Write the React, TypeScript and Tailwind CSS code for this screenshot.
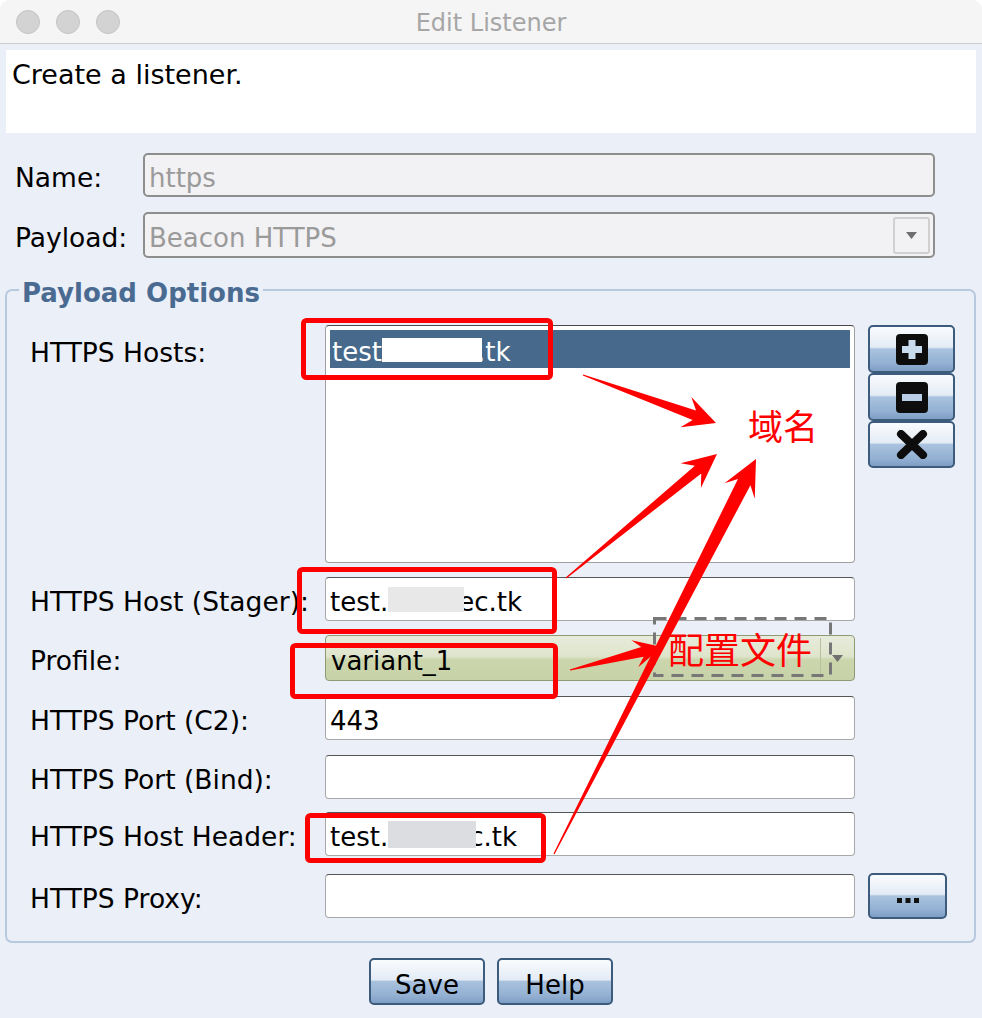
import React from 'react';

type Pt = [number, number];

// tapered annotation arrow: thin tail, swept-back head
function arrowPoints(t: Pt, p: Pt, head: number, hw: number, nw: number) {
  const dx = p[0] - t[0];
  const dy = p[1] - t[1];
  const len = Math.hypot(dx, dy);
  const ux = dx / len;
  const uy = dy / len;
  const nx = -uy;
  const ny = ux;
  const neck: Pt = [p[0] - ux * head * 0.72, p[1] - uy * head * 0.72];
  const barb: Pt = [p[0] - ux * head, p[1] - uy * head];
  const pts: Pt[] = [
    [t[0] + nx * 0.6, t[1] + ny * 0.6],
    [neck[0] + nx * nw, neck[1] + ny * nw],
    [barb[0] + nx * hw, barb[1] + ny * hw],
    p,
    [barb[0] - nx * hw, barb[1] - ny * hw],
    [neck[0] - nx * nw, neck[1] - ny * nw],
    [t[0] - nx * 0.6, t[1] - ny * 0.6],
  ];
  return pts.map((q) => q.join(',')).join(' ');
}

function boxRect(x1: number, y1: number, x2: number, y2: number, sw = 5) {
  return { x: x1 + sw / 2, y: y1 + sw / 2, width: x2 - x1 - sw, height: y2 - y1 - sw };
}

const aquaBtn =
  'border-2 border-[#3d5c7d] rounded-[5px] bg-[linear-gradient(to_bottom,#fafcfe_0%,#e3ebf5_46%,#a9c2de_50%,#94b1d3_82%,#7e9ec5_100%)] flex items-center justify-center';

const field =
  'h-[44px] w-[530px] bg-white border border-[#a8a8a8] border-t-[#555] rounded-[4px] pl-[4px] pt-[6px] flex items-center text-[26px] leading-[30px] text-black';

const Arrow = () => (
  <svg width="11" height="7" viewBox="0 0 11 7">
    <path d="M0 0 H11 L5.5 7 Z" fill="#6f6f6f" />
  </svg>
);

const FormRow = ({ label, children, className = '' }: { label: string; children: React.ReactNode; className?: string }) => (
  <div className={`flex items-center ${className}`}>
    <div className="w-[295px] shrink-0 pt-[6px] text-[26.5px] leading-[30px] text-black">{label}</div>
    {children}
  </div>
);

export default function App() {
  return (
    <div className="relative w-[982px] h-[1018px] overflow-hidden rounded-t-[10px] bg-[#ebeff7] font-['DejaVu_Sans',sans-serif]">
      {/* title bar */}
      <div className="h-[44px] bg-[#f5f5f5] border-b border-[#cdcdcd] grid grid-cols-[1fr_auto_1fr] items-center">
        <div className="flex gap-[16px] pl-[16px]">
          <div className="w-[24px] h-[24px] rounded-full bg-[#d3d3d3] border border-[#c3c3c3]" />
          <div className="w-[24px] h-[24px] rounded-full bg-[#d3d3d3] border border-[#c3c3c3]" />
          <div className="w-[24px] h-[24px] rounded-full bg-[#d3d3d3] border border-[#c3c3c3]" />
        </div>
        <div className="pt-[2px] text-[24px] leading-[30px] text-[#a6a6a6]">Edit Listener</div>
        <div />
      </div>

      <div className="px-[5px] pt-[6px]">
        {/* message */}
        <div className="ml-[1px] w-[970px] h-[83px] bg-white px-[6px] pt-[10px] text-[27px] leading-[30px] text-black">
          Create a listener.
        </div>

        {/* name / payload */}
        <div className="mt-[20px] flex items-center">
          <div className="w-[138px] pl-[10px] pt-[6px] text-[26.5px] leading-[30px] text-black">Name:</div>
          <div className="w-[792px] h-[44px] bg-[#f2f1f3] border-2 border-[#8e8e8e] rounded-[5px] pl-[4px] pt-[6px] flex items-center text-[26px] leading-[30px] text-[#9a9a9a]">
            https
          </div>
        </div>
        <div className="mt-[15px] flex items-center">
          <div className="w-[138px] pl-[10px] pt-[6px] text-[26.5px] leading-[30px] text-black">Payload:</div>
          <div className="w-[792px] h-[46px] bg-[#f2f1f3] border-2 border-[#8e8e8e] rounded-[5px] pl-[4px] pr-[3px] flex items-center text-[26px] leading-[30px] text-[#9a9a9a]">
            <span className="flex-1 pt-[6px]">Beacon HTTPS</span>
            <div className="w-[37px] h-[37px] border-2 border-[#d0d0d0] rounded-[3px] flex items-center justify-center">
              <Arrow />
            </div>
          </div>
        </div>

        {/* payload options */}
        <fieldset className="mt-[17px] w-[971px] border-2 border-[#b7c9de] rounded-[7px]">
          <legend className="relative top-[3px] ml-[12px] px-[3px] text-[26px] leading-[30px] font-bold text-[#4a6b91]">
            Payload Options
          </legend>
          <div className="pl-[23px] pt-[20px] pb-[22px]">
            <div className="flex items-start">
              <div className="w-[295px] shrink-0 h-[50px] pt-[6px] flex items-center text-[26.5px] leading-[30px] text-black">HTTPS Hosts:</div>
              <div className="w-[530px] h-[238px] bg-white border border-[#a0a0a0] border-t-[#4a4a4a] rounded-[4px] p-[4px]">
                <div className="h-[38px] bg-[#476a8c] flex items-center pl-[2px] pt-[6px] text-[26px] leading-[30px] text-white">
                  test
                  <span className="relative z-10 inline-block w-[100px] h-[24px] -mt-[4px] bg-white -mr-[5px]" />
                  .tk
                </div>
              </div>
              <div className="ml-[13px] flex flex-col">
                <div className={`w-[87px] h-[48px] ${aquaBtn}`}>
                  <svg width="32" height="31" viewBox="0 0 32 31">
                    <rect x="0" y="0" width="32" height="31" rx="4" fill="#0d0d0d" />
                    <path d="M12.5 6 H19.5 V12 H26 V19 H19.5 V25 H12.5 V19 H6 V12 H12.5 Z" fill="#c9dbee" />
                  </svg>
                </div>
                <div className={`w-[87px] h-[48px] ${aquaBtn}`}>
                  <svg width="32" height="31" viewBox="0 0 32 31">
                    <rect x="0" y="0" width="32" height="31" rx="4" fill="#0d0d0d" />
                    <rect x="6" y="12" width="20" height="7" fill="#b9cde4" />
                  </svg>
                </div>
                <div className={`w-[87px] h-[47px] ${aquaBtn}`}>
                  <svg width="32" height="29" viewBox="0 0 32 29">
                    <path d="M5 4 L27 25 M27 4 L5 25" stroke="#0d0d0d" strokeWidth="8" strokeLinecap="round" />
                  </svg>
                </div>
              </div>
            </div>

            <FormRow label="HTTPS Host (Stager):" className="mt-[14px]">
              <div className={field}>
                test.
                <span className="relative z-10 inline-block w-[76px] h-[25px] -mt-[5px] bg-[#e8e8e8] -mr-[6px]" />
                ec.tk
              </div>
            </FormRow>

            <FormRow label="Profile:" className="mt-[14px]">
              <div className="w-[530px] h-[46px] border border-[#8f9a74] rounded-[4px] bg-[linear-gradient(to_bottom,#e7ebdb_0%,#dfe5cc_46%,#ccd6ad_54%,#c8d2a9_100%)] flex items-center text-[26px] leading-[30px] text-black">
                <span className="flex-1 pl-[5px] pt-[6px]">variant_1</span>
                <div className="w-[34px] h-[40px] border-l border-[#b9c19f] flex items-center justify-center">
                  <Arrow />
                </div>
              </div>
            </FormRow>

            <FormRow label="HTTPS Port (C2):" className="mt-[15px]">
              <div className={field}>443</div>
            </FormRow>

            <FormRow label="HTTPS Port (Bind):" className="mt-[15px]">
              <div className={field} />
            </FormRow>

            <FormRow label="HTTPS Host Header:" className="mt-[13px]">
              <div className={field}>
                test.
                <span className="relative z-10 inline-block w-[88px] h-[27px] -mt-[5px] bg-[#dcdde1] -mr-[7px]" />
                c.tk
              </div>
            </FormRow>

            <FormRow label="HTTPS Proxy:" className="mt-[17px]">
              <div className={field} />
              <div className={`ml-[13px] w-[79px] h-[46px] ${aquaBtn}`}>
                <svg width="22" height="6" viewBox="0 0 22 6" className="mt-[10px]">
                  <rect x="0" y="0" width="5" height="5" fill="#111" />
                  <rect x="8.5" y="0" width="5" height="5" fill="#111" />
                  <rect x="17" y="0" width="5" height="5" fill="#111" />
                </svg>
              </div>
            </FormRow>
          </div>
        </fieldset>

        {/* buttons */}
        <div className="mt-[15px] flex justify-center gap-[12px]">
          <div className={`w-[116px] h-[47px] pt-[6px] ${aquaBtn} text-[26px] leading-[30px] text-black`}>Save</div>
          <div className={`w-[116px] h-[47px] pt-[6px] ${aquaBtn} text-[26px] leading-[30px] text-black`}>Help</div>
        </div>
      </div>

      {/* red annotations over the dialog */}
      <svg className="absolute top-0 left-0 pointer-events-none" width="982" height="1018" viewBox="0 0 982 1018">
        <rect {...boxRect(301, 318, 553, 380)} rx="3" fill="none" stroke="#ff0000" strokeWidth="5" />
        <rect {...boxRect(297, 567, 557, 634)} rx="3" fill="none" stroke="#ff0000" strokeWidth="5" />
        <rect {...boxRect(290, 643, 558, 699)} rx="3" fill="none" stroke="#ff0000" strokeWidth="5" />
        <rect {...boxRect(305, 813, 546, 863)} rx="3" fill="none" stroke="#ff0000" strokeWidth="5" />

        <rect x="654.5" y="618.5" width="176" height="57" fill="none" stroke="#777" strokeWidth="3" strokeDasharray="12 8" />

        <polygon points={arrowPoints([583, 375], [716, 423], 32, 16, 5)} fill="#ff0000" />
        <polygon points={arrowPoints([566, 578], [717, 454], 34, 16, 5)} fill="#ff0000" />
        <polygon points={arrowPoints([554, 854], [756, 459], 36, 17, 7)} fill="#ff0000" />
        <polygon points={arrowPoints([570, 670], [662, 647], 28, 14, 5)} fill="#ff0000" />

        <text x="748" y="440" fontSize="35" fill="#ff0000" fontFamily="'Noto Sans CJK SC', sans-serif">域名</text>
        <text x="668" y="664" fontSize="36" fill="#ff0000" fontFamily="'Noto Sans CJK SC', sans-serif">配置文件</text>
      </svg>
    </div>
  );
}
